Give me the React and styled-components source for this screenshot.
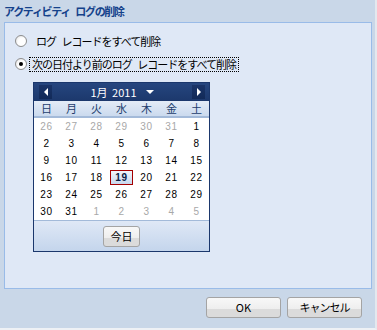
import React from 'react';
import styled, { createGlobalStyle } from 'styled-components';

const Global = createGlobalStyle`
	body {
		margin: 0;
		background: #fff;
	}
	* { box-sizing: border-box; }
`;

const jp = `"Noto Sans CJK JP", "Liberation Sans", sans-serif`;

const Window = styled.div`
	width: 377px;
	height: 330px;
	background: #c9d7e8;
	border-right: 2px solid #e4e8ee;
	border-bottom: 2px solid #eef1f5;
	padding: 0 3px 0 4px;
	display: flex;
	flex-direction: column;
`;

const Title = styled.div`
	height: 22px;
	line-height: 22px;
	font-family: ${jp};
	font-size: 11px;
	font-weight: 700;
	letter-spacing: -1.3px;
	word-spacing: 4px;
	color: #15428b;
`;

const Panel = styled.div`
	height: 267px;
	background: #dfe8f6;
	border: 1px solid #99bbe8;
	padding: 10px 0 0 10px;
	display: flex;
	flex-direction: column;
`;

const Option = styled.label`
	display: flex;
	align-items: center;
	height: 16px;
	margin-bottom: 7px;
	font-family: ${jp};
	font-size: 11px;
	letter-spacing: -1px;
	word-spacing: 4px;
	color: #000;
`;

const Radio = styled.span`
	width: 12px;
	height: 12px;
	border-radius: 50%;
	border: 1px solid #8d8d8d;
	background: radial-gradient(circle at 60% 60%, #fff 45%, #dcdcdc 100%);
	display: flex;
	align-items: center;
	justify-content: center;
	flex-shrink: 0;

	&::after {
		content: '';
		width: 4px;
		height: 4px;
		border-radius: 50%;
		background: ${props => props.checked ? '#000' : 'transparent'};
	}
`;

const OptionText = styled.span`
	margin-left: ${props => props.focused ? '2px' : '6px'};
	padding: 0 2px;
	line-height: 13px;
	border: 1px dotted ${props => props.focused ? '#000' : 'transparent'};
`;

const Calendar = styled.div`
	width: 177px;
	margin: 3px 0 0 18px;
	border: 1px solid #1b376c;
	background: #fff;
	display: flex;
	flex-direction: column;
`;

const CalHeader = styled.div`
	height: 18px;
	background: linear-gradient(#26467f, #1c386c);
	display: flex;
	align-items: center;
	justify-content: space-between;
	padding: 0 4px 0 5px;
`;

const NavBtn = styled.span`
	width: 13px;
	height: 14px;
	background: linear-gradient(#1a3468, #122a58);
	display: flex;
	align-items: center;
	justify-content: center;
`;

const MonthLabel = styled.span`
	display: flex;
	align-items: center;
	gap: 9px;
	font-family: ${jp};
	font-size: 11px;
	word-spacing: 2px;
	color: #fff;
`;

const WeekRow = styled.div`
	display: grid;
	grid-template-columns: repeat(7, 25px);
	height: 17px;
	background: linear-gradient(#e4ecf7, #cbdaee);
	border-bottom: 2px solid #a3bad9;
`;

const WeekDay = styled.span`
	text-align: center;
	line-height: 15px;
	font-family: ${jp};
	font-size: 11px;
	color: #233d6d;
`;

const DayGrid = styled.div`
	display: grid;
	grid-template-columns: repeat(7, 25px);
	grid-auto-rows: 17px;
`;

const Day = styled.span`
	display: flex;
	align-items: center;
	justify-content: center;
	font-family: "Liberation Sans", Arial, sans-serif;
	font-size: 10px;
	letter-spacing: 0.6px;
	color: ${props => props.muted ? '#a8a8a8' : '#000'};

	${props => props.selected && `
		& > span {
			width: 23px;
			height: 15px;
			display: flex;
			align-items: center;
			justify-content: center;
			border: 1px solid #a40000;
			background: linear-gradient(#f2f6fb, #c8d8ee);
			font-weight: 700;
			color: #0b1d45;
		}
	`}
`;

const CalFooter = styled.div`
	height: 31px;
	border-top: 1px solid #a3bad9;
	background: linear-gradient(#dfe8f6, #c4d5ec);
	display: flex;
	align-items: center;
	justify-content: center;
`;

const Button = styled.button`
	width: ${props => props.w}px;
	height: 21px;
	padding: 0;
	border: 1px solid #a4a4a4;
	border-radius: 3px;
	background: linear-gradient(#f8f8f8 0%, #eeeeee 58%, #dbdbdb 59%, #dbdbdb 100%);
	font-family: ${jp};
	font-size: 11px;
	letter-spacing: ${props => props.tight ? '-1px' : '0'};
	color: #000;
	line-height: 19px;
`;

const Footer = styled.div`
	display: flex;
	justify-content: flex-end;
	gap: 6px;
	padding: 8px 10px 0 0;
`;

const weekdays = ['日', '月', '火', '水', '木', '金', '土'];

const days = [
	[26, true], [27, true], [28, true], [29, true], [30, true], [31, true], [1],
	[2], [3], [4], [5], [6], [7], [8],
	[9], [10], [11], [12], [13], [14], [15],
	[16], [17], [18], [19], [20], [21], [22],
	[23], [24], [25], [26], [27], [28], [29],
	[30], [31], [1, true], [2, true], [3, true], [4, true], [5, true],
];

function Arrow({ dir }) {
	return (
		<svg width="6" height="8" viewBox="0 0 6 8">
			{dir === 'left'
				? <polygon points="5,0 5,8 1,4" fill="#fff" />
				: <polygon points="1,0 1,8 5,4" fill="#fff" />}
		</svg>
	);
}

export default function App() {
	return (
		<>
			<Global />
			<Window>
				<Title>アクティビティ ログの削除</Title>
				<Panel>
					<Option>
						<Radio />
						<OptionText>ログ レコードをすべて削除</OptionText>
					</Option>
					<Option>
						<Radio checked />
						<OptionText focused>次の日付より前のログ レコードをすべて削除</OptionText>
					</Option>
					<Calendar>
						<CalHeader>
							<NavBtn><Arrow dir="left" /></NavBtn>
							<MonthLabel>
								1月 2011
								<svg width="8" height="4" viewBox="0 0 8 4">
									<polygon points="0,0 8,0 4,4" fill="#fff" />
								</svg>
							</MonthLabel>
							<NavBtn><Arrow dir="right" /></NavBtn>
						</CalHeader>
						<WeekRow>
							{weekdays.map(w => <WeekDay key={w}>{w}</WeekDay>)}
						</WeekRow>
						<DayGrid>
							{days.map(([n, muted], i) => (
								<Day key={i} muted={muted} selected={i === 24}>
									<span>{n}</span>
								</Day>
							))}
						</DayGrid>
						<CalFooter>
							<Button w={37}>今日</Button>
						</CalFooter>
					</Calendar>
				</Panel>
				<Footer>
					<Button w={75}>OK</Button>
					<Button w={75} tight>キャンセル</Button>
				</Footer>
			</Window>
		</>
	);
}
